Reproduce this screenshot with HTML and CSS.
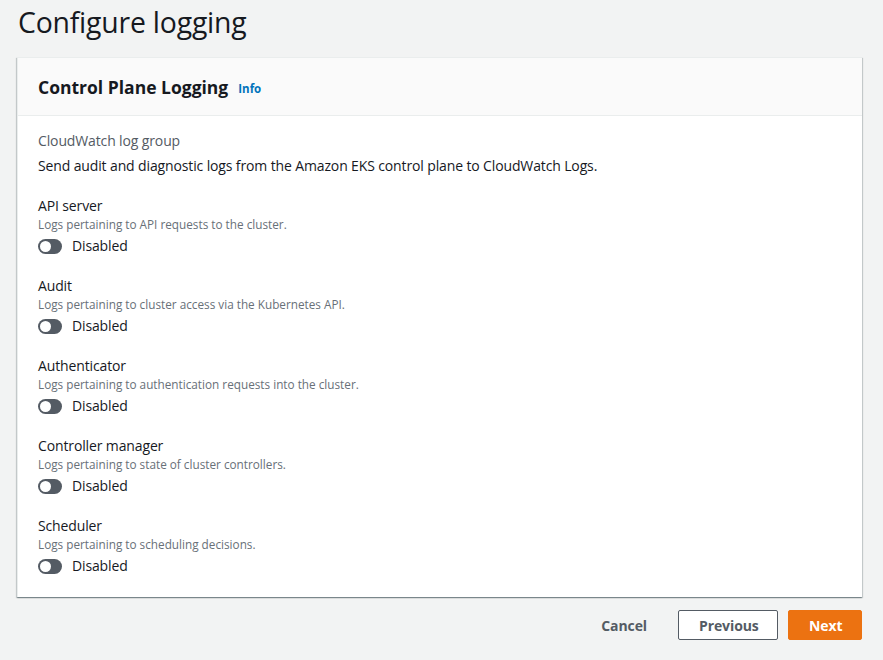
FILE: index.html
```html
<!DOCTYPE html>
<html>
<head>
<meta charset="utf-8">
<link rel="stylesheet" href="styles.css">
</head>
<body>
<div class="page">
  <h1 class="title">Configure logging</h1>
  <div class="card">
    <div class="card-header">
      <h2 class="card-title">Control Plane Logging</h2>
      <span class="info">Info</span>
    </div>
    <div class="card-body">
      <div class="group-label">CloudWatch log group</div>
      <div class="group-desc">Send audit and diagnostic logs from the Amazon EKS control plane to CloudWatch Logs.</div>
      <div class="item">
        <div class="item-label">API server</div>
        <div class="item-desc">Logs pertaining to API requests to the cluster.</div>
        <div class="toggle-row"><span class="toggle"><span class="knob"></span></span><span class="toggle-text">Disabled</span></div>
      </div>
      <div class="item">
        <div class="item-label">Audit</div>
        <div class="item-desc">Logs pertaining to cluster access via the Kubernetes API.</div>
        <div class="toggle-row"><span class="toggle"><span class="knob"></span></span><span class="toggle-text">Disabled</span></div>
      </div>
      <div class="item">
        <div class="item-label">Authenticator</div>
        <div class="item-desc">Logs pertaining to authentication requests into the cluster.</div>
        <div class="toggle-row"><span class="toggle"><span class="knob"></span></span><span class="toggle-text">Disabled</span></div>
      </div>
      <div class="item">
        <div class="item-label">Controller manager</div>
        <div class="item-desc">Logs pertaining to state of cluster controllers.</div>
        <div class="toggle-row"><span class="toggle"><span class="knob"></span></span><span class="toggle-text">Disabled</span></div>
      </div>
      <div class="item">
        <div class="item-label">Scheduler</div>
        <div class="item-desc">Logs pertaining to scheduling decisions.</div>
        <div class="toggle-row"><span class="toggle"><span class="knob"></span></span><span class="toggle-text">Disabled</span></div>
      </div>
    </div>
  </div>
  <div class="actions">
    <button class="btn btn-link">Cancel</button>
    <button class="btn btn-normal">Previous</button>
    <button class="btn btn-primary">Next</button>
  </div>
</div>
</body>
</html>
```

FILE: styles.css
```css
* { box-sizing: border-box; }
html, body {
  margin: 0;
  padding: 0;
  background: #f2f3f3;
  font-family: "Open Sans", "Noto Sans", "Liberation Sans", sans-serif;
  color: #16191f;
}
.page {
  padding: 0 21px 0 17px;
}
.title {
  margin: 0;
  padding: 3px 0 0 1px;
  height: 57px;
  font-size: 28.4px;
  font-weight: 400;
  line-height: 38px;
  letter-spacing: -0.2px;
  color: #16191f;
}
.card {
  background: #fff;
  border-left: 1px solid #eaeded;
  box-shadow: 0 1px 1px 0 rgba(0,28,36,0.3), 1px 1px 1px 0 rgba(0,28,36,0.15), -1px 1px 1px 0 rgba(0,28,36,0.15);
}
.card-header {
  height: 59px;
  background: #fafafa;
  border-bottom: 1px solid #eaeded;
  border-top: 1px solid #eaeded;
  display: flex;
  align-items: center;
  padding: 0 20px 0 20px;
  gap: 10px;
}
.card-title {
  margin: 0;
  font-size: 17.5px;
  font-weight: 700;
  line-height: 24px;
}
.info {
  font-size: 11.5px;
  font-weight: 700;
  color: #0073bb;
  padding-top: 3px;
}
.card-body {
  padding: 14px 20px 17px 20px;
  letter-spacing: -0.13px;
}
.group-label {
  font-size: 14px;
  line-height: 22px;
  color: #545b64;
}
.group-desc {
  font-size: 14px;
  line-height: 22px;
  margin-top: 3px;
  color: #16191f;
}
.item {
  margin-top: 18px;
}
.item + .item {
  margin-top: 15px;
}
.item-label {
  font-size: 14px;
  line-height: 22px;
}
.item-desc {
  font-size: 11.75px;
  line-height: 15px;
  color: #687078;
  letter-spacing: 0;
}
.toggle-row {
  display: flex;
  align-items: center;
  gap: 10px;
  height: 28px;
}
.toggle {
  width: 24px;
  height: 15px;
  border-radius: 8px;
  background: #545b64;
  position: relative;
  display: inline-block;
}
.knob {
  position: absolute;
  left: 2px;
  top: 2px;
  width: 11px;
  height: 11px;
  border-radius: 50%;
  background: #fff;
}
.toggle-text {
  font-size: 14px;
  line-height: 22px;
}
.actions {
  display: flex;
  justify-content: flex-end;
  align-items: center;
  gap: 10px;
  margin-top: 13px;
}
.btn {
  font-family: inherit;
  font-size: 14px;
  font-weight: 700;
  height: 30px;
  border-radius: 2px;
  padding: 0 20px;
  cursor: pointer;
  letter-spacing: -0.1px;
}
.btn-link {
  background: transparent;
  border: 1px solid transparent;
  color: #545b64;
}
.btn-normal {
  background: #fff;
  border: 1px solid #545b64;
  color: #545b64;
  width: 100px;
}
.btn-primary {
  background: #ec7211;
  border: 1px solid #ec7211;
  color: #fff;
  width: 74px;
}
```
